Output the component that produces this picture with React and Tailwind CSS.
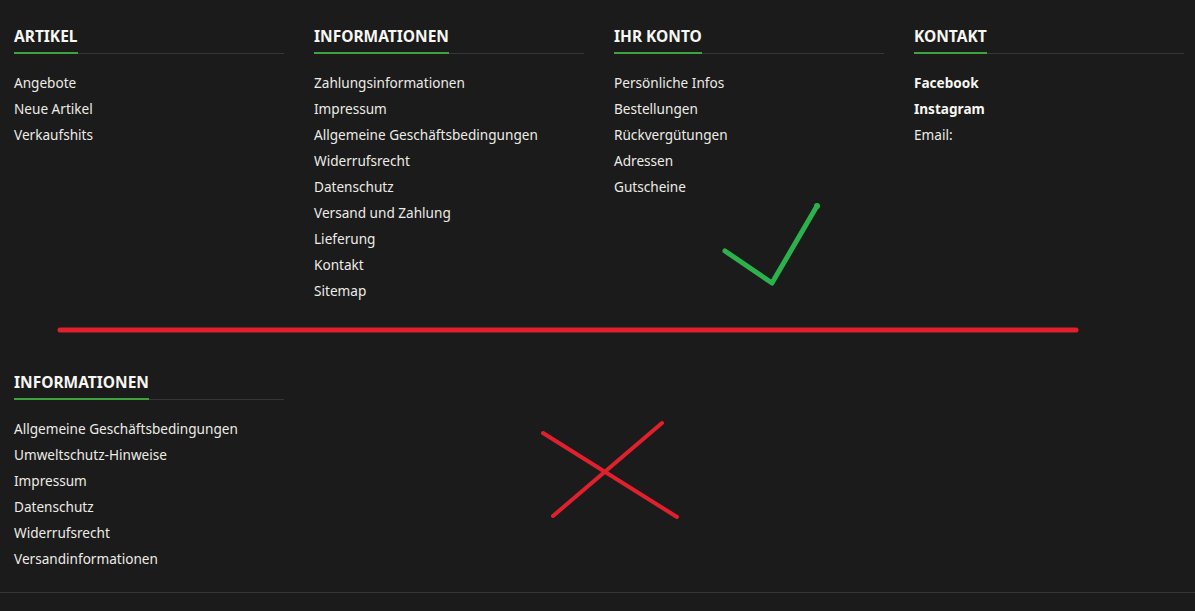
import React from "react";

const font = { fontFamily: '"Noto Sans", "Liberation Sans", sans-serif' };

function Column({ title, links, boldLinks = [] }) {
  return (
    <div className="w-[270px] shrink-0">
      <div className="border-b border-[#363636] flex">
        <h3 className="text-[15.5px] leading-[20px] font-bold text-[#f6f6f2] pb-[6px] border-b-2 border-[#3ea33e] -mb-px uppercase">
          {title}
        </h3>
      </div>
      <ul className="mt-[16px] flex flex-col">
        {links.map((l) => (
          <li
            key={l}
            className={`text-[13.6px] leading-[26px] ${
              boldLinks.includes(l) ? "font-bold text-[#f7f7f2]" : "text-[#ecebe6]"
            }`}
          >
            {l}
          </li>
        ))}
      </ul>
    </div>
  );
}

export default function App() {
  return (
    <div className="relative w-full h-[611px] bg-[#1b1b1b] overflow-hidden" style={font}>
      <div className="flex pl-[14px] gap-[30px] pt-[26px]">
        <Column title="Artikel" links={["Angebote", "Neue Artikel", "Verkaufshits"]} />
        <Column
          title="Informationen"
          links={[
            "Zahlungsinformationen",
            "Impressum",
            "Allgemeine Geschäftsbedingungen",
            "Widerrufsrecht",
            "Datenschutz",
            "Versand und Zahlung",
            "Lieferung",
            "Kontakt",
            "Sitemap",
          ]}
        />
        <Column
          title="Ihr Konto"
          links={["Persönliche Infos", "Bestellungen", "Rückvergütungen", "Adressen", "Gutscheine"]}
        />
        <Column
          title="Kontakt"
          links={["Facebook", "Instagram", "Email:"]}
          boldLinks={["Facebook", "Instagram"]}
        />
      </div>

      <div className="flex pl-[14px] pt-[68px]">
        <Column
          title="Informationen"
          links={[
            "Allgemeine Geschäftsbedingungen",
            "Umweltschutz-Hinweise",
            "Impressum",
            "Datenschutz",
            "Widerrufsrecht",
            "Versandinformationen",
          ]}
        />
      </div>

      <div className="mt-[20px] border-t border-[#363636]" />

      <svg
        className="absolute inset-0 pointer-events-none"
        width="1195"
        height="611"
        viewBox="0 0 1195 611"
        fill="none"
        strokeLinecap="round"
        strokeLinejoin="round"
      >
        <line x1="60" y1="330" x2="1076" y2="330" stroke="#e0202c" strokeWidth="5" />
        <polyline points="725,251 772,283 817,206" stroke="#2bb24c" strokeWidth="5" />
        <circle cx="817" cy="206" r="3" fill="#2bb24c" />
        <line x1="543" y1="433" x2="677" y2="517" stroke="#e0202c" strokeWidth="4" />
        <line x1="662" y1="423" x2="553" y2="516" stroke="#e0202c" strokeWidth="4" />
      </svg>
    </div>
  );
}
